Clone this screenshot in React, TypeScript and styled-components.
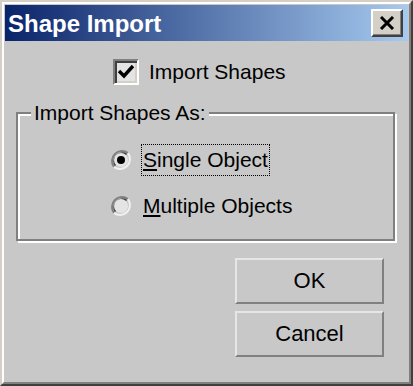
import React from "react";
import styled, { createGlobalStyle } from "styled-components";

const Global = createGlobalStyle`
  html, body { margin: 0; padding: 0; background: #c8c8c8; }
  * { box-sizing: border-box; }
`;

const Frame = styled.div`
  width: 413px;
  height: 386px;
  border: 2px solid;
  border-color: #d4d0c8 #404040 #404040 #d4d0c8;
  font-family: "Liberation Sans", Arial, sans-serif;
`;

const FrameInner = styled.div`
  height: 100%;
  border: 2px solid;
  border-color: #ffffff #808080 #808080 #ffffff;
  background: #c8c8c8;
  padding: 1px;
  display: flex;
  flex-direction: column;
`;

const TitleBar = styled.div`
  height: 36px;
  flex: none;
  display: flex;
  align-items: center;
  justify-content: space-between;
  padding: 0 5px 0 3px;
  background: linear-gradient(to right, #0a246a, #a6caf0);
`;

const Title = styled.span`
  color: #fff;
  font-weight: bold;
  font-size: 24px;
  line-height: 1;
  margin-top: 2px;
`;

const CloseButton = styled.div`
  width: 32px;
  height: 28px;
  background: #d4d0c8;
  border: 2px solid;
  border-color: #ffffff #404040 #404040 #ffffff;
  box-shadow: inset -1px -1px 0 #808080;
  display: flex;
  align-items: center;
  justify-content: center;
`;

const Body = styled.div`
  flex: 1;
  display: flex;
  flex-direction: column;
  padding-top: 18px;
  font-size: 21px;
  color: #000;
`;

const CheckRow = styled.label`
  display: flex;
  align-items: center;
  gap: 10px;
  margin-left: 108px;
  height: 26px;
`;

const CheckBox = styled.span`
  width: 26px;
  height: 26px;
  border: 2px solid;
  border-color: #808080 #ffffff #ffffff #808080;
  background: #e4e4e4;
  box-shadow: inset 2px 2px 0 #404040, inset -2px -2px 0 #d4d0c8;
  display: flex;
  align-items: center;
  justify-content: center;
`;

const Group = styled.fieldset`
  margin: 15px 13px 0 11px;
  padding: 0 0 17px 0;
  border: 2px solid #808080;
  box-shadow: inset 2px 2px 0 #ffffff, 2px 2px 0 #ffffff;
  min-width: 0;
`;

const Legend = styled.legend`
  margin-left: 13px;
  padding: 0 3px;
  background: #c8c8c8;
  line-height: 25px;
`;

const RadioList = styled.div`
  display: flex;
  flex-direction: column;
  gap: 14px;
  padding: 19px 0 0 92px;
`;

const RadioRow = styled.label`
  display: flex;
  align-items: center;
  gap: 9px;
  height: 32px;
`;

const RadioLabel = styled.span<{ $focused?: boolean }>`
  padding: 2px 1px 3px 1px;
  line-height: 25px;
  border: 1px dotted ${(p) => (p.$focused ? "#000" : "transparent")};
`;

const ButtonColumn = styled.div`
  display: flex;
  flex-direction: column;
  align-items: flex-end;
  gap: 7px;
  margin: 17px 24px 0 0;
`;

const Button = styled.div`
  width: 149px;
  height: 46px;
  background: #c8c8c8;
  border: 2px solid;
  border-color: #e6e6e6 #808080 #808080 #e6e6e6;
  display: flex;
  align-items: center;
  justify-content: center;
  font-size: 22px;
`;

const Radio: React.FC<{ checked?: boolean }> = ({ checked }) => (
  <svg width="22" height="22" viewBox="0 0 22 22">
    <path d="M4 18 A10 10 0 0 1 18 4" fill="none" stroke="#808080" strokeWidth="2" />
    <path d="M5.5 16.5 A8 8 0 0 1 16.5 5.5" fill="none" stroke="#404040" strokeWidth="2" />
    <path d="M18 4 A10 10 0 0 1 4 18" fill="none" stroke="#f0f0f0" strokeWidth="2" />
    <circle cx="11" cy="11" r="7" fill="#e4e4e4" />
    {checked && <circle cx="11" cy="11" r="4" fill="#000" />}
  </svg>
);

export default function App() {
  return (
    <>
      <Global />
      <Frame>
        <FrameInner>
          <TitleBar>
            <Title>Shape Import</Title>
            <CloseButton>
              <svg width="16" height="14" viewBox="0 0 16 14">
                <path d="M2 1 L14 13 M14 1 L2 13" stroke="#000" strokeWidth="3" />
              </svg>
            </CloseButton>
          </TitleBar>
          <Body>
            <CheckRow>
              <CheckBox>
                <svg width="18" height="16" viewBox="0 0 18 16">
                  <path d="M2 7 L7 12 L16 2" fill="none" stroke="#000" strokeWidth="3.4" />
                </svg>
              </CheckBox>
              <span>Import Shapes</span>
            </CheckRow>
            <Group>
              <Legend>Import Shapes As:</Legend>
              <RadioList>
                <RadioRow>
                  <Radio checked />
                  <RadioLabel $focused>
                    <u>S</u>ingle Object
                  </RadioLabel>
                </RadioRow>
                <RadioRow>
                  <Radio />
                  <RadioLabel>
                    <u>M</u>ultiple Objects
                  </RadioLabel>
                </RadioRow>
              </RadioList>
            </Group>
            <ButtonColumn>
              <Button>OK</Button>
              <Button>Cancel</Button>
            </ButtonColumn>
          </Body>
        </FrameInner>
      </Frame>
    </>
  );
}
